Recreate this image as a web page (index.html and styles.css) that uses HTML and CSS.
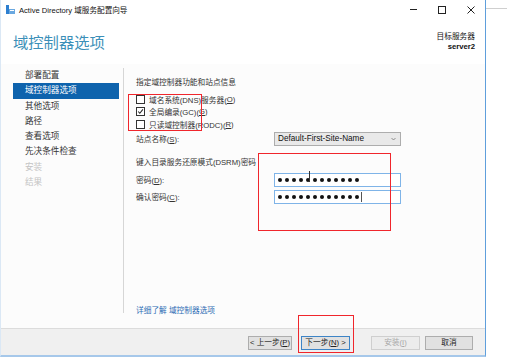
FILE: index.html
```html
<!DOCTYPE html>
<html lang="zh-CN">

<head>
    <meta charset="UTF-8">
    <meta name="viewport" content="width=device-width, initial-scale=1.0">
    <title>Active Directory 域服务配置向导</title>
    <link rel="stylesheet" href="styles.css">
</head>

<body>
    <div class="desktop">
        <div class="window">
            <div class="titlebar">
                <svg class="app-icon" width="9" height="9" viewBox="0 0 9 9">
                    <rect x="0" y="0" width="3" height="9" fill="#2d7fd0"/>
                    <rect x="3" y="4" width="6" height="5" fill="#6aa8e0"/>
                    <rect x="4" y="5" width="4" height="1" fill="#ffffff"/>
                </svg>
                <span class="title-text">Active Directory 域服务配置向导</span>
                <div class="controls">
                    <svg width="7" height="7" viewBox="0 0 7 7"><line x1="0" y1="3.5" x2="7" y2="3.5" stroke="#222" stroke-width="1"/></svg>
                    <svg width="8" height="8" viewBox="0 0 8 8"><rect x="0.5" y="0.5" width="7" height="7" fill="none" stroke="#222" stroke-width="1"/></svg>
                    <svg width="8" height="8" viewBox="0 0 8 8"><path d="M0.5 0.5 L7.5 7.5 M7.5 0.5 L0.5 7.5" stroke="#222" stroke-width="1"/></svg>
                </div>
            </div>

            <div class="header">
                <h1>域控制器选项</h1>
                <div class="target">
                    <div>目标服务器</div>
                    <div class="server-name">server2</div>
                </div>
            </div>

            <div class="main">
                <ul class="nav">
                    <li>部署配置</li>
                    <li class="active">域控制器选项</li>
                    <li>其他选项</li>
                    <li>路径</li>
                    <li>查看选项</li>
                    <li>先决条件检查</li>
                    <li class="disabled">安装</li>
                    <li class="disabled">结果</li>
                </ul>

                <div class="content">
                    <p class="section-title">指定域控制器功能和站点信息</p>
                    <div class="check-row"><span class="checkbox"></span>域名系统(DNS)服务器(<u>O</u>)</div>
                    <div class="check-row">
                        <span class="checkbox">
                            <svg width="9" height="9" viewBox="0 0 9 9"><path d="M1.5 4.5 L3.6 6.8 L7.6 1.8" fill="none" stroke="#222" stroke-width="1.3"/></svg>
                        </span>全局编录(GC)(<u>G</u>)
                    </div>
                    <div class="check-row"><span class="checkbox"></span>只读域控制器(RODC)(<u>R</u>)</div>

                    <div class="field-row site-row">
                        <span class="field-label">站点名称(<u>S</u>):</span>
                        <div class="select">
                            <span>Default-First-Site-Name</span>
                            <svg width="5" height="4" viewBox="0 0 5 4"><path d="M0.5 1 L2.5 3 L4.5 1" fill="none" stroke="#777" stroke-width="0.8"/></svg>
                        </div>
                    </div>

                    <p class="section-title dsrm">键入目录服务还原模式(DSRM)密码</p>
                    <div class="field-row pw-first">
                        <span class="field-label">密码(<u>D</u>):</span>
                        <div class="password">
                            <span class="dot"></span><span class="dot"></span><span class="dot"></span><span class="dot"></span><span class="dot"></span><span class="dot"></span>
                            <span class="dot"></span><span class="dot"></span><span class="dot"></span><span class="dot"></span><span class="dot"></span><span class="dot"></span>
                            <span class="ibeam"></span>
                        </div>
                    </div>
                    <div class="field-row pw-second">
                        <span class="field-label">确认密码(<u>C</u>):</span>
                        <div class="password">
                            <span class="dot"></span><span class="dot"></span><span class="dot"></span><span class="dot"></span><span class="dot"></span><span class="dot"></span>
                            <span class="dot"></span><span class="dot"></span><span class="dot"></span><span class="dot"></span><span class="dot"></span><span class="dot"></span>
                            <span class="caret"></span>
                        </div>
                    </div>

                    <a class="more-link" href="#">详细了解 域控制器选项</a>
                </div>
            </div>

            <div class="footer">
                <button class="btn btn-prev">&lt; 上一步(<u>P</u>)</button>
                <button class="btn btn-next">下一步(<u>N</u>) &gt;</button>
                <button class="btn btn-install" disabled>安装(<u>I</u>)</button>
                <button class="btn btn-cancel">取消</button>
            </div>

            <!-- 标注框 -->
            <div class="mark mark-roles"></div>
            <div class="mark mark-password"></div>
            <div class="mark mark-next"></div>
        </div>
        <div class="side"></div>
    </div>
</body>

</html>
```
FILE: styles.css
```css
* {
    box-sizing: border-box;
}

body {
    margin: 0;
    font-family: "Liberation Sans", "Noto Sans CJK SC", sans-serif;
    font-size: 7.7px;
    color: #222;
    background-color: #ffffff;
}

.desktop {
    display: flex;
    width: 507px;
    height: 357px;
    overflow: hidden;
}

.window {
    position: relative;
    display: flex;
    flex-direction: column;
    width: 486px;
    height: 357px;
    background-color: #fcfcfc;
    border-right: 1px solid #5f9fdc;
    border-bottom: 2px solid #a6c8ea;
    border-left: 1px solid #dbe8f5;
}

.side {
    flex: 1;
    margin-top: 8px;
    border-top: 1px solid #cfcfcf;
    background-color: #ffffff;
}

.titlebar {
    display: flex;
    align-items: center;
    height: 19px;
    padding-left: 5px;
    background-color: #ffffff;
}

.app-icon {
    margin-right: 4px;
}

.title-text {
    font-size: 7.6px;
    color: #111;
}

.controls {
    display: flex;
    align-items: center;
    margin-left: auto;
    margin-right: 10px;
    gap: 21px;
}

.header {
    display: flex;
    justify-content: space-between;
    height: 45px;
    padding: 13px 10px 0 12px;
    background-color: #ffffff;
}

h1 {
    margin: 1px 0 0 0;
    font-size: 15.3px;
    line-height: 20px;
    font-weight: normal;
    color: #3b8fb8;
}

.target {
    text-align: right;
    line-height: 10px;
    color: #111;
}

.server-name {
    font-weight: bold;
}

.main {
    display: flex;
    flex: 1;
}

.nav {
    width: 123px;
    margin: 4px 0 15px 0;
    padding: 0;
    list-style-type: none;
    border-right: 1px solid #d6d6d6;
    font-size: 8.6px;
}

.nav li {
    height: 15.3px;
    line-height: 15.3px;
    margin-left: 12px;
    padding-left: 12px;
    width: 106px;
    color: #333;
}

.nav li.active {
    background-color: #0e63ad;
    color: #ffffff;
}

.nav li.disabled {
    color: #c4c4c4;
}

.content {
    display: flex;
    flex-direction: column;
    flex: 1;
    padding: 13px 0 11px 12px;
}

.section-title {
    margin: 0;
    line-height: 12px;
    color: #333;
}

.check-row {
    display: flex;
    align-items: center;
    height: 12.5px;
    color: #333;
}

.check-row:first-of-type {
    margin-top: 4px;
}

.checkbox {
    display: flex;
    align-items: center;
    justify-content: center;
    width: 9px;
    height: 9px;
    margin-right: 4px;
    border: 1px solid #333;
    background-color: #ffffff;
}

.check-row u,
.field-label u,
.btn u {
    text-decoration: underline;
}

.field-row {
    display: flex;
    align-items: center;
    height: 14px;
}

.field-label {
    width: 138px;
    color: #333;
}

.site-row {
    margin-top: 1px;
}

.select {
    display: flex;
    align-items: center;
    justify-content: space-between;
    width: 127px;
    height: 14px;
    padding: 0 4px 0 3px;
    border: 1px solid #adadad;
    background-color: #e9e9e9;
    font-size: 8.2px;
    color: #111;
}

.dsrm {
    margin-top: 11px;
}

.pw-first {
    margin-top: 4px;
}

.pw-second {
    margin-top: 3px;
}

.password {
    position: relative;
    display: flex;
    align-items: center;
    gap: 3px;
    width: 127px;
    height: 14px;
    padding-left: 3px;
    border: 1px solid #7fb4e8;
    background-color: #ffffff;
}

.dot {
    width: 4px;
    height: 4px;
    border-radius: 50%;
    background-color: #111;
}

.ibeam {
    position: absolute;
    left: 34px;
    top: -3px;
    width: 1px;
    height: 11px;
    background-color: #333;
}

.caret {
    width: 1px;
    height: 10px;
    margin-left: -1px;
    background-color: #555;
}

.more-link {
    margin-top: auto;
    line-height: 12px;
    color: #2b6bb3;
    text-decoration: none;
}

.footer {
    display: flex;
    align-items: flex-start;
    justify-content: flex-end;
    height: 27px;
    padding: 7px 12px 0 0;
    border-top: 1px solid #dcdcdc;
    background-color: #f0f0f0;
}

.btn {
    height: 14px;
    padding: 0;
    font-family: inherit;
    font-size: 7.7px;
    line-height: 12px;
    color: #222;
    background-color: #e1e1e1;
    border: 1px solid #adadad;
}

.btn-prev {
    width: 44px;
}

.btn-next {
    width: 49px;
    margin-left: 9px;
    border-color: #3d84c6;
}

.btn-install {
    width: 49px;
    margin-left: 21px;
    color: #a8a8a8;
    background-color: #ececec;
    border-color: #cfcfcf;
}

.btn-cancel {
    width: 48px;
    margin-left: 5px;
}

.mark {
    position: absolute;
    border: 1px solid #f0262c;
}

.mark-roles {
    left: 127px;
    top: 94px;
    width: 74px;
    height: 37px;
}

.mark-password {
    left: 257px;
    top: 153px;
    width: 133px;
    height: 78px;
}

.mark-next {
    left: 297px;
    top: 315px;
    width: 56px;
    height: 38px;
}
```
